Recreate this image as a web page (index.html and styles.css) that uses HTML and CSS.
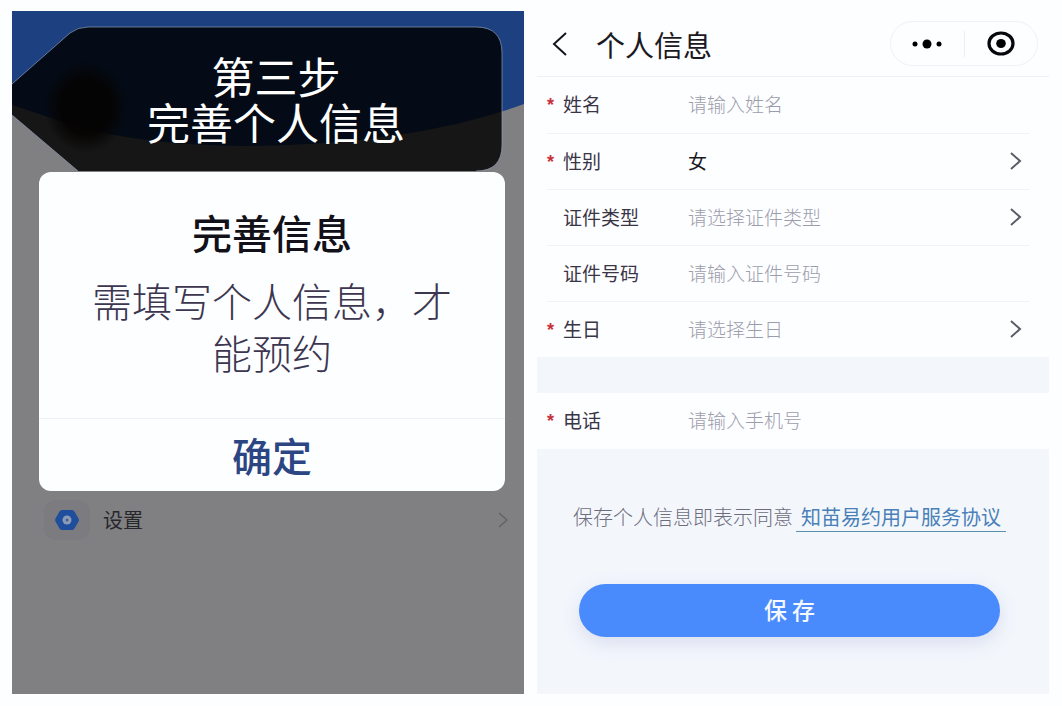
FILE: index.html
```html
<!DOCTYPE html>
<html lang="zh-CN">
<head>
<meta charset="utf-8">
<title>个人信息</title>
<link rel="stylesheet" href="styles.css">
</head>
<body>
<main class="board">
  <section class="guide">
    <svg class="guide-hero" viewBox="0 0 512 136" preserveAspectRatio="none" aria-hidden="true">
      <path d="M0 0H512V93Q400 134 230 135Q110 134 36 106L0 94Z" fill="#1d4180"/>
    </svg>
    <header class="banner">
      <svg class="banner-shape" viewBox="0 0 490 144" preserveAspectRatio="none" aria-hidden="true">
        <defs>
          <radialGradient id="blob">
            <stop offset="0.6" stop-color="#050302" stop-opacity="0.9"/>
            <stop offset="1" stop-color="#050302" stop-opacity="0"/>
          </radialGradient>
        </defs>
        <path d="M0 57L58 6Q66 0 76 0H464Q490 0 490 26V118Q490 144 464 144H66L0 88Z" fill="#000" fill-opacity="0.83"/>
        <path d="M0 57L58 6Q66 0 76 0H464Q490 0 490 26V118Q490 144 464 144M66 144L0 88" fill="none" stroke="#8d9ab5" stroke-opacity="0.7"/>
        <ellipse cx="74" cy="80" rx="42" ry="46" fill="url(#blob)"/>
      </svg>
      <h1 class="banner-title">第三步<br>完善个人信息</h1>
    </header>
    <div class="dialog" role="dialog" aria-labelledby="dialog-title">
      <div class="dialog-body">
        <h2 class="dialog-title" id="dialog-title">完善信息</h2>
        <p class="dialog-text">需填写个人信息，才能预约</p>
      </div>
      <button class="dialog-confirm" type="button">确定</button>
    </div>
    <a class="settings" href="#settings">
      <span class="settings-icon">
        <svg width="26" height="20" viewBox="0 0 26 20" aria-hidden="true">
          <path d="M8 0H18Q19.500 0 20.500 1.500L24.500 8.500Q25.500 10 24.500 11.500L20.500 18.500Q19.500 20 18 20H8Q6.500 20 5.500 18.500L1.500 11.500Q.5 10 1.500 8.500L5.500 1.500Q6.500 0 8 0Z" fill="#1f4f9c"/>
          <circle cx="13" cy="10" r="4.500" fill="#8b9bb8"/>
          <circle cx="13" cy="10" r="1.500" fill="#44618f"/>
        </svg>
      </span>
      <span class="settings-label">设置</span>
      <svg class="settings-arrow" width="10" height="18" viewBox="0 0 10 18" aria-hidden="true"><path d="M1 2L9 9L1 16" fill="none" stroke="#626262" stroke-width="1.500"/></svg>
    </a>
  </section>

  <section class="profile">
    <header class="navbar">
      <button class="back" type="button" aria-label="返回">
        <svg width="16" height="24" viewBox="0 0 16 24" aria-hidden="true"><path d="M14 1L2 12L14 23" fill="none" stroke="#15151c" stroke-width="2"/></svg>
      </button>
      <h2 class="navbar-title">个人信息</h2>
      <div class="capsule">
        <button class="capsule-button" type="button" aria-label="更多">
          <svg width="32" height="12" viewBox="0 0 32 12" aria-hidden="true"><circle cx="4" cy="6" r="2.500"/><circle cx="16" cy="6" r="4.500"/><circle cx="28" cy="6" r="2.500"/></svg>
        </button>
        <button class="capsule-button" type="button" aria-label="关闭">
          <svg width="28" height="25" viewBox="0 0 28 25" aria-hidden="true"><ellipse cx="14" cy="12.500" rx="12" ry="10.500" fill="none" stroke="#08080c" stroke-width="3.200"/><ellipse cx="14" cy="12.500" rx="4.800" ry="4.500"/></svg>
        </button>
      </div>
    </header>
    <form class="form">
      <div class="group">
        <div class="row">
          <span class="star">*</span><label class="label" for="name">姓名</label>
          <input class="field" id="name" type="text" placeholder="请输入姓名">
        </div>
        <div class="row">
          <span class="star">*</span><label class="label" for="gender">性别</label>
          <select class="field field-filled" id="gender"><option>女</option><option>男</option></select>
          <svg class="arrow" width="12" height="18" viewBox="0 0 12 18" aria-hidden="true"><path d="M1 1L10 9L1 17"/></svg>
        </div>
        <div class="row">
          <span class="star"></span><label class="label" for="id-type">证件类型</label>
          <select class="field" id="id-type"><option>请选择证件类型</option></select>
          <svg class="arrow" width="12" height="18" viewBox="0 0 12 18" aria-hidden="true"><path d="M1 1L10 9L1 17"/></svg>
        </div>
        <div class="row">
          <span class="star"></span><label class="label" for="id-number">证件号码</label>
          <input class="field" id="id-number" type="text" placeholder="请输入证件号码">
        </div>
        <div class="row">
          <span class="star">*</span><label class="label" for="birthday">生日</label>
          <select class="field" id="birthday"><option>请选择生日</option></select>
          <svg class="arrow" width="12" height="18" viewBox="0 0 12 18" aria-hidden="true"><path d="M1 1L10 9L1 17"/></svg>
        </div>
      </div>
      <div class="group">
        <div class="row">
          <span class="star">*</span><label class="label" for="phone">电话</label>
          <input class="field" id="phone" type="tel" placeholder="请输入手机号">
        </div>
      </div>
      <div class="actions">
        <p class="agreement">保存个人信息即表示同意<a class="agreement-link" href="#agreement">知苗易约用户服务协议</a></p>
        <button class="save" type="submit">保 存</button>
      </div>
    </form>
  </section>
</main>
</body>
</html>
```

FILE: styles.css
```css
* { box-sizing: border-box; }

body {
  margin: 0;
  background: #fdfeff;
  color: #3a3546;
  font-family: "Noto Sans CJK SC", sans-serif;
}

h1, h2, p { margin: 0; }

button, input, select { font-family: inherit; }

button {
  padding: 0;
  border: 0;
  background: none;
  cursor: pointer;
}

.board {
  display: grid;
  grid-template-columns: 1fr 1fr;
  gap: 13px;
  min-height: 100vh;
  padding: 11px 13px 12px 12px;
}

/* Guide panel */
.guide {
  position: relative;
  padding-top: 16px;
  background: #808082;
}

.guide-hero {
  position: absolute;
  top: 0;
  left: 0;
  width: 100%;
  height: 136px;
}

.banner {
  position: relative;
  margin-right: 22px;
  padding: 25px 0 27px;
}

.banner-shape {
  position: absolute;
  inset: 0;
  width: 100%;
  height: 100%;
  overflow: visible;
}

.banner-title {
  position: relative;
  padding-left: 38px;
  color: #fff;
  font-size: 43px;
  font-weight: 400;
  line-height: 46px;
  text-align: center;
}

.dialog {
  position: relative;
  margin: 1px 19px 0 27px;
  border-radius: 12px;
  background: #fdfeff;
  text-align: center;
}

.dialog-body { padding: 34px 44px 40px; }

.dialog-title {
  color: #121018;
  font-size: 40px;
  font-weight: 500;
  line-height: 52px;
}

.dialog-text {
  margin-top: 16px;
  color: #3c3650;
  font-size: 40px;
  font-weight: 300;
  line-height: 52px;
}

.dialog-confirm {
  width: 100%;
  border-top: 1px solid #eef0f3;
  color: #2c4583;
  font-size: 40px;
  font-weight: 500;
  line-height: 72px;
}

.settings {
  display: flex;
  align-items: center;
  margin-top: 9px;
  padding: 0 16px 0 32px;
  color: #27272b;
  font-size: 20px;
  line-height: 28px;
  text-decoration: none;
}

.settings-icon {
  display: grid;
  place-items: center;
  width: 46px;
  height: 40px;
  border-radius: 12px;
  background: #7b7b80;
}

.settings-label { margin-left: 13px; }

.settings-arrow { margin-left: auto; }

/* Profile panel */
.profile {
  display: flex;
  flex-direction: column;
  background: #f3f7fc;
}

.navbar {
  display: flex;
  align-items: center;
  height: 66px;
  padding: 0 11px 0 15px;
  border-bottom: 1px solid #eeeff4;
  background: #fdfeff;
}

.back { display: flex; }

.navbar-title {
  margin-left: 28px;
  color: #1a1922;
  font-size: 29px;
  font-weight: 400;
  line-height: 44px;
}

.capsule {
  display: flex;
  align-items: center;
  width: 148px;
  height: 45px;
  margin-left: auto;
  border: 1px solid #f0f1f4;
  border-radius: 23px;
}

.capsule-button {
  display: grid;
  flex: 1;
  place-items: center;
  height: 26px;
}

.capsule-button + .capsule-button { border-left: 1px solid #edeef2; }

.form {
  display: flex;
  flex: 1;
  flex-direction: column;
}

.group {
  padding: 0 19px 0 10px;
  background: #fdfeff;
}

.group + .group { margin-top: 36px; }

.row {
  display: grid;
  grid-template-columns: 16px 125px 1fr auto;
  align-items: center;
  height: 56px;
  padding-bottom: 2px;
  font-size: 19px;
  line-height: 28px;
}

.row + .row { border-top: 1px solid #f2f3f7; }

.star {
  padding-top: 2px;
  color: #c8323c;
  font-family: "Liberation Sans", sans-serif;
  font-size: 18px;
  font-weight: 700;
  line-height: 20px;
}

.field {
  width: 100%;
  padding: 0;
  border: 0;
  outline: 0;
  appearance: none;
  background: none;
  color: #9c9dac;
  font-size: 19px;
  font-weight: 300;
  line-height: 28px;
}

.field::placeholder { color: #9c9dac; }

.field-filled {
  color: #1a1922;
  font-weight: 400;
}

.arrow {
  margin-right: 8px;
  fill: none;
  stroke: #5c5b66;
  stroke-width: 2;
}

.actions {
  padding: 52px 49px 57px 42px;
  text-align: center;
}

.agreement {
  margin: 0 -24px;
  color: #6d6c7c;
  font-size: 20px;
  font-weight: 300;
  line-height: 32px;
}

.agreement-link {
  margin-left: 3px;
  padding: 0 5px;
  border-bottom: 1px solid #5b93ad;
  color: #4a7fb8;
  font-weight: 400;
  text-decoration: none;
}

.save {
  width: 100%;
  height: 53px;
  margin-top: 51px;
  padding-bottom: 3px;
  border-radius: 27px;
  background: #498bfd;
  box-shadow: 0 6px 20px #d9dcee;
  color: #f4f9ff;
  font-size: 23px;
  font-weight: 500;
}
```
